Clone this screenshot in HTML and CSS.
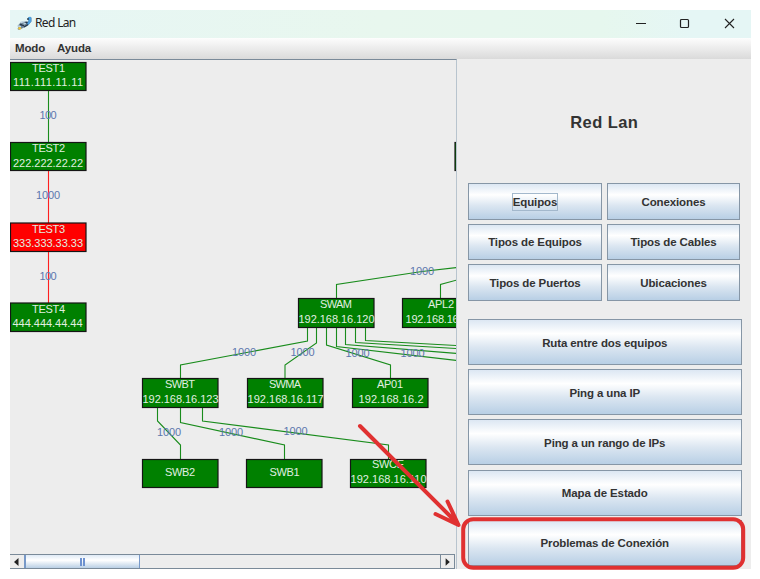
FILE: index.html
```html
<!DOCTYPE html>
<html lang="es">
<head>
<meta charset="utf-8">
<title>Red Lan</title>
<link rel="stylesheet" href="styles.css">
</head>
<body>
<div class="window">
  <header class="titlebar">
    <svg class="app-icon" width="16" height="16" viewBox="0 0 16 16">
      <path d="M0.500 10l3.500-4 3-.5 3 .5 1.500-1.500L11 1.500l2-.8 1.500 1v3.800L11 9.500 8.500 11 6 12l-4 2-1.500-1 1-2z" fill="#6f8698"/>
      <path d="M11 1.500l2-.8 1.300.8v4L11.500 9l-2-1 2-3z" fill="#4a9fe0"/>
      <path d="M3.500 6.500l4-1M5 9l4-2M1 10l3 .5" stroke="#c2d8e6" stroke-width="1.300"/>
      <path d="M3 8.500l4 1M7 11l4-2.500M8.500 6l2 1M11 2v2" stroke="#24384c" stroke-width="1.400"/>
      <circle cx="2.700" cy="12.300" r="1.400" fill="#edc33c"/>
    </svg>
    <span class="app-title">Red Lan</span>
    <svg class="controls" width="100" height="12" viewBox="0 0 100 12" fill="none" stroke="#222">
      <path d="M0 5.500h10" stroke-width="1"/>
      <rect x="44.500" y="1.500" width="8" height="8" rx="1" stroke-width="1.200"/>
      <path d="M89 1l9 9M98 1l-9 9" stroke-width="1.100"/>
    </svg>
  </header>
  <nav class="menubar"><span>Modo</span><span>Ayuda</span></nav>
  <main class="content">
    <section class="map-pane">
      <svg class="map" width="446" height="494" viewBox="10 60 446 494">
        <g class="link">
          <path d="M48.500 90V143"/>
          <path class="down" d="M48.500 171V223M48.500 251V304"/>
          <path d="M336.500 298V284.500L422 271.500L457 267.500"/>
          <path d="M440.500 298V284.500L457 280"/>
          <path d="M307.500 327V341L180.500 365V379"/>
          <path d="M316.500 327V343L285 365V379"/>
          <path d="M326.500 327V345L390.500 365V379"/>
          <path d="M336.500 327V346.500L457 360.500"/>
          <path d="M345.500 327V344.500L457 353.500"/>
          <path d="M355.500 327V342.500L457 348.500"/>
          <path d="M365.500 327V340.500L457 345.500"/>
          <path d="M157.500 407V421L180.500 445V460"/>
          <path d="M180.500 407V422.500L284.500 445V460"/>
          <path d="M202.500 407V421L388.500 445V460"/>
        </g>
        <g class="speed">
          <text x="48" y="119" textLength="17">100</text>
          <text x="48" y="199" textLength="24">1000</text>
          <text x="48" y="280" textLength="17">100</text>
          <text x="422" y="275" textLength="24">1000</text>
          <text x="244" y="356" textLength="24">1000</text>
          <text x="302.500" y="356" textLength="24">1000</text>
          <text x="357.500" y="357" textLength="24">1000</text>
          <text x="412.500" y="357" textLength="24">1000</text>
          <text x="169" y="436" textLength="24">1000</text>
          <text x="231" y="436" textLength="24">1000</text>
          <text x="295.500" y="435" textLength="24">1000</text>
        </g>
        <g class="node">
          <rect x="10.500" y="62.500" width="75.500" height="28"/>
          <rect x="10.500" y="142.500" width="75.500" height="28"/>
          <rect class="down" x="10.500" y="223" width="75.500" height="28.500"/>
          <rect x="10.500" y="303" width="75.500" height="28.500"/>
          <rect x="298.500" y="298.500" width="75.500" height="29"/>
          <rect x="402.500" y="298.500" width="75.500" height="29"/>
          <rect x="142.500" y="378.500" width="75.500" height="29"/>
          <rect x="247.500" y="378.500" width="75.500" height="29"/>
          <rect x="352.500" y="378.500" width="75.500" height="29"/>
          <rect x="142.500" y="459.500" width="75.500" height="28"/>
          <rect x="246.500" y="459.500" width="75.500" height="28"/>
          <rect x="350.500" y="459.500" width="75.500" height="28"/>
          <rect x="455" y="142.500" width="75.500" height="28"/>
        </g>
        <g class="label">
          <text x="48.500" y="72" textLength="33">TEST1</text><text x="48" y="86" textLength="70">111.111.11.11</text>
          <text x="48.500" y="152" textLength="33">TEST2</text><text x="48" y="167" textLength="70">222.222.22.22</text>
          <text x="48.500" y="232.500" textLength="33">TEST3</text><text x="48" y="247" textLength="70">333.333.33.33</text>
          <text x="48.500" y="313" textLength="33">TEST4</text><text x="47.500" y="327" textLength="70">444.444.44.44</text>
          <text x="336" y="308" textLength="32">SWAM</text><text x="336.500" y="323" textLength="76">192.168.16.120</text>
          <text x="441" y="308" textLength="26">APL2</text><text x="436.500" y="323" textLength="62">192.168.16.3</text>
          <text x="180" y="388" textLength="30">SWBT</text><text x="180.500" y="403" textLength="76">192.168.16.123</text>
          <text x="285" y="388" textLength="32">SWMA</text><text x="285.500" y="403" textLength="76">192.168.16.117</text>
          <text x="390" y="388" textLength="26">AP01</text><text x="391" y="403" textLength="65">192.168.16.2</text>
          <text x="180" y="475.500" textLength="30">SWB2</text>
          <text x="284.500" y="475.500" textLength="30">SWB1</text>
          <text x="388" y="468" textLength="32">SWCE</text><text x="388.500" y="482.500" textLength="76">192.168.16.110</text>
        </g>
      </svg>
      <div class="scrollbar">
        <svg width="14" height="13" viewBox="0 0 14 13"><path d="M8.500 3v8L4 7z" fill="#222"/></svg>
        <div class="track"><div class="thumb"><i></i><i></i></div></div>
        <svg class="next" width="14" height="13" viewBox="0 0 14 13"><path d="M5 3v8l4.500-4z" fill="#222"/></svg>
      </div>
    </section>
    <aside class="panel">
      <h1>Red Lan</h1>
      <div class="small-buttons">
        <button><span class="focus">Equipos</span></button><button>Conexiones</button>
        <button>Tipos de Equipos</button><button>Tipos de Cables</button>
        <button>Tipos de Puertos</button><button>Ubicaciones</button>
      </div>
      <div class="wide-buttons">
        <button>Ruta entre dos equipos</button>
        <button>Ping a una IP</button>
        <button>Ping a un rango de IPs</button>
        <button>Mapa de Estado</button>
        <button>Problemas de Conexión</button>
      </div>
    </aside>
  </main>
</div>
<svg class="callout" width="760" height="579" viewBox="0 0 760 579">
  <path d="M360 426L458 524M447.500 501.500L458.500 525L435.500 514"/>
  <rect x="463.200" y="519.300" width="280" height="48.500" rx="10"/>
</svg>
</body>
</html>
```

FILE: styles.css
```css
* { box-sizing: border-box; }
body {
  margin: 0;
  padding: 10px;
  background: #fff;
  color: #333;
  font-family: "Liberation Sans", Arial, sans-serif;
}
.window {
  width: 741px;
  height: 559px;
  display: flex;
  flex-direction: column;
  background: #ededed;
}
.titlebar {
  height: 28px;
  flex: none;
  display: flex;
  align-items: center;
  padding: 0 15px 0 7px;
  background: linear-gradient(90deg, #e7f6f5 0%, #e8f7ee 50%, #e6f7ee 80%, #e5f6f5 92%);
}
.app-icon { margin-right: 2px; }
.app-title {
  color: #222;
  font: 12px/26px "Noto Sans", sans-serif;
  height: 28px;
  letter-spacing: -0.65px;
}
.controls { margin-left: auto; }
.menubar {
  height: 21px;
  flex: none;
  display: flex;
  gap: 12px;
  padding-left: 5px;
  background: linear-gradient(#fdfdfd, #dadada);
  font: bold 11.500px/20px "Liberation Sans", Arial, sans-serif;
  letter-spacing: -0.15px;
}
.content {
  flex: 1;
  display: flex;
  min-height: 0;
}
.map-pane {
  width: 447px;
  flex: none;
  border-top: 1px solid #7a8a99;
  border-right: 1px solid #b8c4ce;
}
.map { display: block; }
.link path { fill: none; stroke: #198c1c; stroke-width: 1.1; }
.link .down { stroke: #ff2020; }
.node rect { fill: #008000; stroke: #151515; stroke-width: 1.2; }
.node .down { fill: #f00; }
.speed text, .label text { font-size: 11px; text-anchor: middle; }
.speed { fill: #5c77ae; }
.label { fill: #e0efe0; }
.scrollbar {
  width: 445px;
  height: 15px;
  display: flex;
  border-top: 1px solid #7a8a99;
  border-bottom: 1px solid #7a8a99;
  border-right: 1px solid #7a8a99;
}
.track { flex: 1; height: 13px; }
.thumb {
  width: 116px;
  height: 13px;
  display: flex;
  align-items: center;
  justify-content: center;
  gap: 1px;
  border: 1px solid #7899c8;
  border-width: 0 1px 0 2px;
  background: linear-gradient(#dfeaf6, #fff 40%, #b9cfe5);
}
.thumb i { width: 2px; height: 8px; background: #6e92d0; }
.next { border-left: 1px solid #7a8a99; }
.panel {
  flex: 1;
  padding: 53px 9px 0 10.5px;
}
h1 {
  margin: 0 1px 0 0;
  height: 20px;
  font-size: 16.500px;
  line-height: 20px;
  letter-spacing: 0.4px;
  text-align: center;
  color: #333;
}
.small-buttons {
  display: grid;
  grid-template-columns: 134px 133px;
  grid-auto-rows: 36.500px;
  gap: 4px 5px;
  margin-top: 51px;
  padding-left: 0.5px;
}
.wide-buttons {
  display: grid;
  grid-auto-rows: 46px;
  gap: 4.200px;
  margin-top: 18.500px;
}
button {
  margin: 0;
  padding: 1px 0 0;
  border: 1px solid #8696a6;
  background: linear-gradient(#dce7f3, #fff 31%, #dbe6f1 62%, #b8cfe5);
  color: #333;
  font: bold 11.500px "Liberation Sans", Arial, sans-serif;
  letter-spacing: -0.12px;
}
.focus {
  display: inline-block;
  line-height: 16px;
  border: 1px solid #a3b8cc;
}
.callout {
  position: absolute;
  top: 0;
  left: 0;
  fill: none;
  stroke: #e03131;
  stroke-width: 4;
  stroke-linecap: round;
  stroke-linejoin: round;
  pointer-events: none;
}
```
